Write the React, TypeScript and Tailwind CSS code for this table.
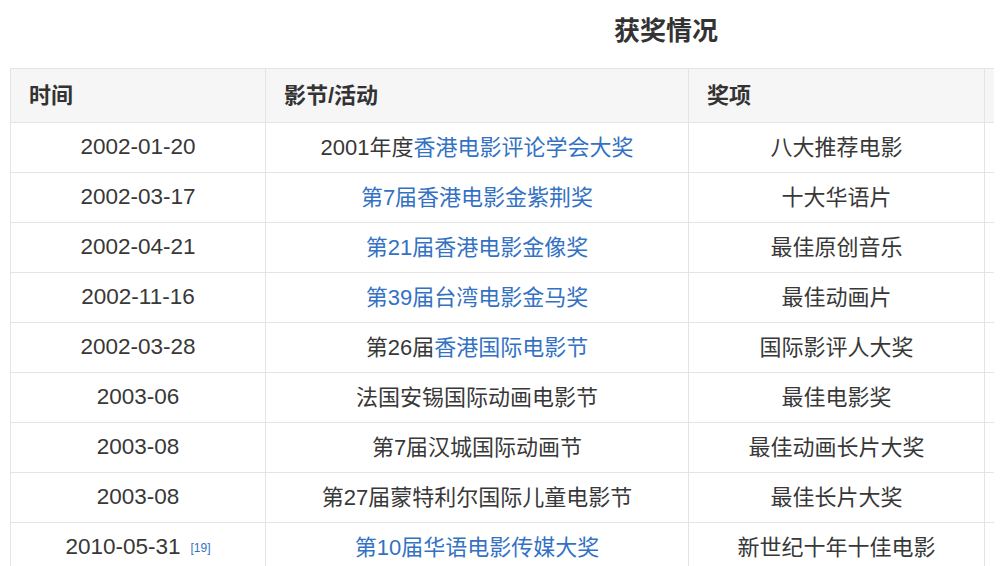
import React from "react";

type Row = { date: string; sup?: string; event: React.ReactNode; award: string };

const L = ({ children }: { children: React.ReactNode }) => (
  <span className="text-[#3371c4]">{children}</span>
);

const rows: Row[] = [
  { date: "2002-01-20", event: <>2001年度<L>香港电影评论学会大奖</L></>, award: "八大推荐电影" },
  { date: "2002-03-17", event: <L>第7届香港电影金紫荆奖</L>, award: "十大华语片" },
  { date: "2002-04-21", event: <L>第21届香港电影金像奖</L>, award: "最佳原创音乐" },
  { date: "2002-11-16", event: <L>第39届台湾电影金马奖</L>, award: "最佳动画片" },
  { date: "2002-03-28", event: <>第26届<L>香港国际电影节</L></>, award: "国际影评人大奖" },
  { date: "2003-06", event: <>法国安锡国际动画电影节</>, award: "最佳电影奖" },
  { date: "2003-08", event: <>第7届汉城国际动画节</>, award: "最佳动画长片大奖" },
  { date: "2003-08", event: <>第27届蒙特利尔国际儿童电影节</>, award: "最佳长片大奖" },
  { date: "2010-05-31", sup: "[19]", event: <L>第10届华语电影传媒大奖</L>, award: "新世纪十年十佳电影" },
];

export default function App() {
  return (
    <div
      className="w-[1000px] h-[566px] overflow-hidden bg-white text-[#383838]"
      style={{ fontFamily: '"Liberation Sans", "Noto Sans CJK SC", sans-serif' }}
    >
      <div className="h-[68px] pl-[614px] pt-[12px]">
        <h2
          className="text-[26px] leading-[34px] font-bold text-[#333]"
          style={{ fontFamily: '"Noto Sans CJK SC", sans-serif' }}
        >
          获奖情况
        </h2>
      </div>
      <div className="pl-[10px]">
        <table className="border-collapse text-[22px] leading-none">
          <thead>
            <tr className="h-[54px] bg-[#f6f6f6]">
              <th className="w-[255px] border border-[#e4e4e4] pl-[18px] text-left font-bold text-[#333]">时间</th>
              <th className="w-[423px] border border-[#e4e4e4] pl-[18px] text-left font-bold text-[#333]">影节/活动</th>
              <th className="w-[296px] border border-[#e4e4e4] pl-[18px] text-left font-bold text-[#333]">奖项</th>
              <th className="w-[9px] border-y border-[#e4e4e4]"></th>
            </tr>
          </thead>
          <tbody>
            {rows.map((r, i) => (
              <tr key={i} className="h-[50px]">
                <td className="border border-[#e4e4e4] text-center text-[22.5px]">
                  {r.date}
                  {r.sup && (
                    <sup className="ml-[10px] text-[12px] text-[#3371c4] relative top-[-2px]">{r.sup}</sup>
                  )}
                </td>
                <td className="border border-[#e4e4e4] text-center">{r.event}</td>
                <td className="border border-[#e4e4e4] text-center">{r.award}</td>
                <td className="border-y border-[#e4e4e4]"></td>
              </tr>
            ))}
          </tbody>
        </table>
      </div>
    </div>
  );
}
